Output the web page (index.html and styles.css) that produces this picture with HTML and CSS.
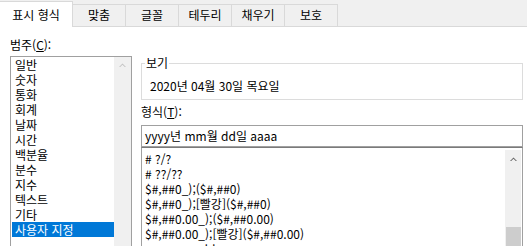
FILE: index.html
```html
<!DOCTYPE html>
<html lang="ko">
<head>
    <meta charset="UTF-8">
    <title>셀 서식</title>
    <link rel="stylesheet" href="styles.css">
</head>
<body>
<div class="tabs">
    <div class="tab active">표시 형식</div>
    <div class="tab">맞춤</div>
    <div class="tab">글꼴</div>
    <div class="tab">테두리</div>
    <div class="tab">채우기</div>
    <div class="tab">보호</div>
</div>

<div class="page">
    <div class="left">
        <div class="label">범주(<u>C</u>):</div>
        <div class="listbox">
            <ul class="category">
                <li>일반</li>
                <li>숫자</li>
                <li>통화</li>
                <li>회계</li>
                <li>날짜</li>
                <li>시간</li>
                <li>백분율</li>
                <li>분수</li>
                <li>지수</li>
                <li>텍스트</li>
                <li>기타</li>
                <li class="current">사용자 지정</li>
            </ul>
            <div class="scrollbar light">
                <svg class="arrow" width="7" height="5" viewBox="0 0 7 5"><path d="M0 4 L3.5 0.5 L7 4 L5.8 4 L3.5 1.8 L1.2 4 Z"/></svg>
            </div>
        </div>
    </div>

    <div class="right">
        <fieldset class="sample">
            <legend>보기</legend>
            <div class="sample-text">2020년 04월 30일 목요일</div>
        </fieldset>
        <div class="label">형식(<u>T</u>):</div>
        <div class="input">yyyy년 mm월 dd일 aaaa</div>
        <div class="formats">
            <ul class="codes">
                <li># ?/?</li>
                <li># ??/??</li>
                <li>$#,##0_);($#,##0)</li>
                <li>$#,##0_);[빨강]($#,##0)</li>
                <li>$#,##0.00_);($#,##0.00)</li>
                <li>$#,##0.00_);[빨강]($#,##0.00)</li>
                <li>yyyy-mm-dd</li>
                <li>yyyy-mm-dd h:mm</li>
            </ul>
            <div class="scrollbar">
                <svg class="arrow" width="7" height="5" viewBox="0 0 7 5"><path d="M0 4 L3.5 0.5 L7 4 L5.8 4 L3.5 1.8 L1.2 4 Z"/></svg>
                <div class="thumb"></div>
            </div>
        </div>
    </div>
</div>
</body>
</html>
```

FILE: styles.css
```css
* {
    margin: 0;
    padding: 0;
    box-sizing: border-box;
}

ul {
    list-style: none;
}

html, body {
    height: 100%;
    overflow: hidden;
}

body {
    background: #fff;
    color: #000;
    font-family: "Noto Sans CJK KR", sans-serif;
    font-size: 12px;
}

u {
    text-decoration: underline;
    text-underline-offset: 1px;
}

/* 탭 */
.tabs {
    display: flex;
    align-items: flex-end;
    height: 27px;
    background: #f0f0f0;
    border-bottom: 1px solid #d9d9d9;
}

.tab {
    width: 53px;
    height: 22px;
    line-height: 20px;
    text-align: center;
    border-top: 1px solid #d9d9d9;
    border-right: 1px solid #d9d9d9;
    background: #f0f0f0;
}

.tab.active {
    width: 73px;
    height: 26px;
    padding-top: 3px;
    margin-bottom: -1px;
    background: #fff;
}

/* 본문 */
.page {
    display: flex;
    padding-left: 10px;
}

.left {
    width: 122px;
    padding-top: 10px;
}

.right {
    width: 382px;
    margin-left: 9px;
    padding-top: 29px;
}

.label {
    height: 16px;
    line-height: 16px;
}

.listbox {
    display: flex;
    height: 230px;
    margin-top: 3px;
    border: 1px solid #a0a0a0;
}

.category {
    flex: 1;
    padding-left: 1px;
}

.category li {
    height: 15px;
    line-height: 15px;
    padding-left: 3px;
}

.category li.current {
    background: #0078d7;
    color: #fff;
}

.scrollbar {
    width: 17px;
    background: #f0f0f0;
    display: flex;
    flex-direction: column;
    align-items: center;
}

.scrollbar .arrow {
    margin-top: 6px;
    fill: #606060;
}

.scrollbar.light .arrow {
    fill: #c2c2c2;
}

/* 보기 */
.sample {
    border: 1px solid #dcdcdc;
    padding: 0 0 5px 3px;
}

.sample legend {
    padding: 0 1px;
    line-height: 14px;
}

.sample-text {
    margin-top: 8px;
    padding-left: 5px;
    line-height: 16px;
}

.right .label {
    margin-top: 4px;
}

.input {
    height: 22px;
    margin-top: 5px;
    padding-left: 3px;
    line-height: 20px;
    border: 1px solid #a0a0a0;
}

.formats {
    display: flex;
    height: 120px;
    border: 1px solid #a0a0a0;
    border-top-color: #7a7a7a;
}

.codes {
    flex: 1;
    padding: 3px 0 0 3px;
}

.codes li {
    height: 15px;
    line-height: 15px;
}

.formats .scrollbar {
    width: 16px;
    margin: 2px 1px 0 0;
}

.formats .arrow {
    margin-top: 7px;
}

.thumb {
    width: 15px;
    margin: 65px 0 0 1px;
    flex: 1;
    background: #cdcdcd;
}
```
